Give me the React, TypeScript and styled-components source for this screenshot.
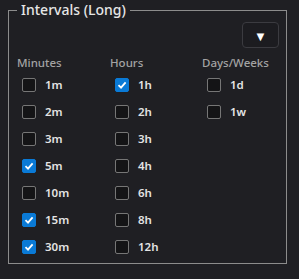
import React, { useState } from "react";
import styled, { createGlobalStyle } from "styled-components";

const GlobalStyle = createGlobalStyle`
  html, body {
    margin: 0;
    background: #1f1f23;
    font-family: "Noto Sans", "Open Sans", sans-serif;
  }
`;

const Page = styled.div`
  width: 299px;
  height: 279px;
  box-sizing: border-box;
  padding: 2px 12px 0 8px;
  background: #1f1f23;
`;

const Group = styled.fieldset`
  margin: 0;
  height: 262px;
  box-sizing: border-box;
  border: 1px solid #8c8c8c;
  padding: 4px 7px 0 8px;
  display: flex;
  flex-direction: column;
`;

const Legend = styled.legend`
  padding: 0 4px;
  font-size: 14px;
  font-weight: 500;
  line-height: 16px;
  color: #e6e6e6;
`;

const Toolbar = styled.div`
  display: flex;
  justify-content: flex-end;
`;

const MenuButton = styled.button`
  width: 37px;
  height: 26px;
  border: 1px solid #3b3b40;
  border-radius: 4px;
  background: #1c1c20;
  color: #ffffff;
  font-size: 13px;
  line-height: 1;
  padding: 2px 0 0;
  display: flex;
  align-items: center;
  justify-content: center;
`;

const Columns = styled.div`
  display: grid;
  grid-template-columns: 93px 92px 1fr;
  margin-top: 7px;
`;

const Column = styled.div`
  display: flex;
  flex-direction: column;
`;

const Heading = styled.div`
  font-size: 11.5px;
  font-weight: 500;
  line-height: 16px;
  color: #a3a3a3;
`;

const Row = styled.label`
  display: flex;
  align-items: center;
  gap: 9px;
  height: 27px;
  padding-left: 5px;
  font-size: 11.5px;
  font-weight: 600;
  color: #e4e4e4;
`;

const Box = styled.span<{ $on: boolean }>`
  width: 14px;
  height: 14px;
  box-sizing: border-box;
  border-radius: 2px;
  border: 1px solid ${(p) => (p.$on ? "#0a7ad6" : "#767676")};
  background: ${(p) => (p.$on ? "#0a7ad6" : "#141416")};
  display: flex;
  align-items: center;
  justify-content: center;
`;

const Check = () => (
  <svg width="10" height="10" viewBox="0 0 10 10">
    <path d="M1.5 5.2 L4 7.6 L8.6 2.3" fill="none" stroke="#fff" strokeWidth="1.8" />
  </svg>
);

type Item = { label: string; on: boolean };

const groups: { title: string; items: Item[] }[] = [
  {
    title: "Minutes",
    items: [
      { label: "1m", on: false },
      { label: "2m", on: false },
      { label: "3m", on: false },
      { label: "5m", on: true },
      { label: "10m", on: false },
      { label: "15m", on: true },
      { label: "30m", on: true },
    ],
  },
  {
    title: "Hours",
    items: [
      { label: "1h", on: true },
      { label: "2h", on: false },
      { label: "3h", on: false },
      { label: "4h", on: false },
      { label: "6h", on: false },
      { label: "8h", on: false },
      { label: "12h", on: false },
    ],
  },
  {
    title: "Days/Weeks",
    items: [
      { label: "1d", on: false },
      { label: "1w", on: false },
    ],
  },
];

const App = () => {
  const [data, setData] = useState(groups);

  const toggle = (g: number, i: number) => {
    setData((prev) =>
      prev.map((grp, gi) =>
        gi !== g
          ? grp
          : { ...grp, items: grp.items.map((it, ii) => (ii === i ? { ...it, on: !it.on } : it)) }
      )
    );
  };

  return (
    <Page>
      <GlobalStyle />
      <Group>
        <Legend>Intervals (Long)</Legend>
        <Toolbar>
          <MenuButton>▼</MenuButton>
        </Toolbar>
        <Columns>
          {data.map((grp, g) => (
            <Column key={grp.title}>
              <Heading>{grp.title}</Heading>
              {grp.items.map((it, i) => (
                <Row key={it.label} onClick={() => toggle(g, i)}>
                  <Box $on={it.on}>{it.on && <Check />}</Box>
                  {it.label}
                </Row>
              ))}
            </Column>
          ))}
        </Columns>
      </Group>
    </Page>
  );
};

export default App;
